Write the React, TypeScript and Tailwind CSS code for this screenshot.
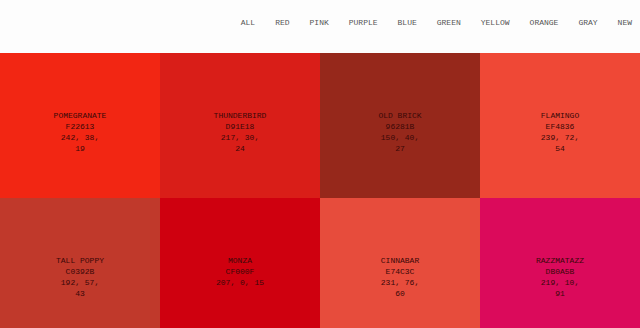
const nav = ["ALL", "RED", "PINK", "PURPLE", "BLUE", "GREEN", "YELLOW", "ORANGE", "GRAY", "NEW"];

const colors = [
  { name: "POMEGRANATE", hex: "F22613", rgb: ["242, 38,", "19"], bg: "bg-[#f22613]" },
  { name: "THUNDERBIRD", hex: "D91E18", rgb: ["217, 30,", "24"], bg: "bg-[#d91e18]" },
  { name: "OLD BRICK", hex: "96281B", rgb: ["150, 40,", "27"], bg: "bg-[#96281b]" },
  { name: "FLAMINGO", hex: "EF4836", rgb: ["239, 72,", "54"], bg: "bg-[#ef4836]" },
  { name: "TALL POPPY", hex: "C0392B", rgb: ["192, 57,", "43"], bg: "bg-[#c0392b]" },
  { name: "MONZA", hex: "CF000F", rgb: ["207, 0, 15"], bg: "bg-[#cf000f]" },
  { name: "CINNABAR", hex: "E74C3C", rgb: ["231, 76,", "60"], bg: "bg-[#e74c3c]" },
  { name: "RAZZMATAZZ", hex: "DB0A5B", rgb: ["219, 10,", "91"], bg: "bg-[#db0a5b]" },
];

export default function App() {
  return (
    <div className="min-h-screen bg-white font-['Liberation_Mono',monospace]">
      <header className="h-[53px] bg-[#fdfdfd] flex items-start justify-end pr-[8px] pt-[17px]">
        <nav className="flex gap-[20px] text-[8px] leading-[11px] text-[#555]">
          {nav.map((n) => (
            <a key={n} className="cursor-pointer">{n}</a>
          ))}
        </nav>
      </header>
      <main className="grid grid-cols-4">
        {colors.map((c) => (
          <div key={c.name} className={`${c.bg} h-[145px] pt-[57px] text-center text-[8px] leading-[11px] text-[#3a0808]`}>
            <div>{c.name}</div>
            <div>{c.hex}</div>
            {c.rgb.map((r) => (
              <div key={r}>{r}</div>
            ))}
          </div>
        ))}
      </main>
    </div>
  );
}
